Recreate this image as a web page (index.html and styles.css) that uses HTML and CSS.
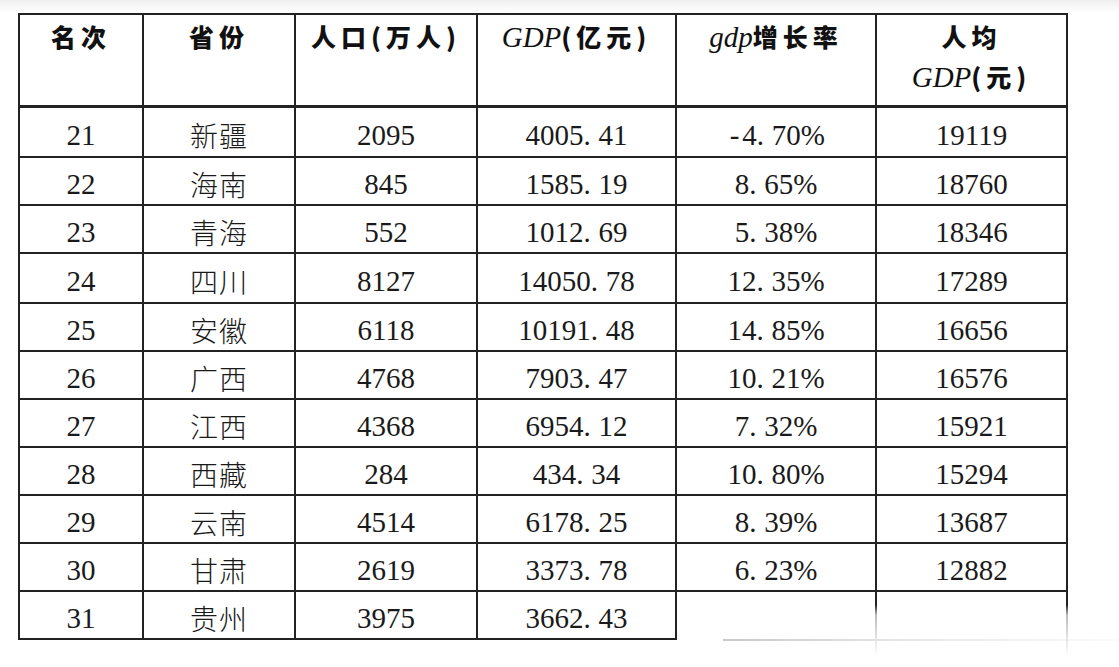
FILE: index.html
```html
<!DOCTYPE html>
<html lang="zh-CN">
<head>
<meta charset="utf-8">
<title>人均GDP排名</title>
<link rel="stylesheet" href="styles.css">
</head>
<body>
<div class="page">
<table class="gdp">
  <colgroup>
    <col class="w1"><col class="w2"><col class="w3"><col class="w4"><col class="w5"><col class="w6">
  </colgroup>
  <thead>
    <tr>
      <th>名次</th>
      <th>省份</th>
      <th>人口(万人)</th>
      <th><span class="lat">GDP</span>(亿元)</th>
      <th><span class="lat">gdp</span>增长率</th>
      <th>人均<br><span class="lat">GDP</span>(元)</th>
    </tr>
  </thead>
  <tbody>
    <tr class="tall"><td>21</td><td class="zh">新疆</td><td>2095</td><td>4005<span class="pt">.</span>41</td><td><span class="minus">-</span>4<span class="pt">.</span>70%</td><td>19119</td></tr>
    <tr><td>22</td><td class="zh">海南</td><td>845</td><td>1585<span class="pt">.</span>19</td><td>8<span class="pt">.</span>65%</td><td>18760</td></tr>
    <tr><td>23</td><td class="zh">青海</td><td>552</td><td>1012<span class="pt">.</span>69</td><td>5<span class="pt">.</span>38%</td><td>18346</td></tr>
    <tr class="tall"><td>24</td><td class="zh">四川</td><td>8127</td><td>14050<span class="pt">.</span>78</td><td>12<span class="pt">.</span>35%</td><td>17289</td></tr>
    <tr><td>25</td><td class="zh">安徽</td><td>6118</td><td>10191<span class="pt">.</span>48</td><td>14<span class="pt">.</span>85%</td><td>16656</td></tr>
    <tr><td>26</td><td class="zh">广西</td><td>4768</td><td>7903<span class="pt">.</span>47</td><td>10<span class="pt">.</span>21%</td><td>16576</td></tr>
    <tr><td>27</td><td class="zh">江西</td><td>4368</td><td>6954<span class="pt">.</span>12</td><td>7<span class="pt">.</span>32%</td><td>15921</td></tr>
    <tr><td>28</td><td class="zh">西藏</td><td>284</td><td>434<span class="pt">.</span>34</td><td>10<span class="pt">.</span>80%</td><td>15294</td></tr>
    <tr><td>29</td><td class="zh">云南</td><td>4514</td><td>6178<span class="pt">.</span>25</td><td>8<span class="pt">.</span>39%</td><td>13687</td></tr>
    <tr><td>30</td><td class="zh">甘肃</td><td>2619</td><td>3373<span class="pt">.</span>78</td><td>6<span class="pt">.</span>23%</td><td>12882</td></tr>
    <tr class="last"><td>31</td><td class="zh">贵州</td><td>3975</td><td>3662<span class="pt">.</span>43</td><td class="c5"></td><td class="c6"></td></tr>
  </tbody>
</table>
</div>
</body>
</html>
```
FILE: styles.css
```css
html, body {
  margin: 0;
  padding: 0;
}
body {
  background: linear-gradient(#efefef 0, #f7f7f7 6px, #ffffff 13px) no-repeat, #ffffff;
  width: 1119px;
  height: 667px;
  overflow: hidden;
  color: #1a1a1a;
  font-family: "Liberation Serif", serif;
}
.page {
  padding: 13px 0 0 18px;
}
.gdp {
  border-collapse: collapse;
  table-layout: fixed;
  width: 1050px;
}
.w1 { width: 124px; }
.w2 { width: 152px; }
.w3 { width: 182px; }
.w4 { width: 199px; }
.w5 { width: 200px; }
.w6 { width: 191px; }

.gdp th,
.gdp td {
  border: 2px solid #222;
  text-align: center;
  padding: 0;
}
.gdp th {
  height: 89px;
  vertical-align: top;
  padding-top: 1px;
  font-family: "Noto Sans CJK SC", sans-serif;
  font-weight: 900;
  font-size: 25px;
  line-height: 40px;
  letter-spacing: 5px;
  color: #111;
  border-bottom-width: 3px;
}
.gdp th .lat {
  font-family: "Liberation Serif", serif;
  font-style: italic;
  font-weight: 400;
  font-size: 29px;
  letter-spacing: 0;
}
.gdp td {
  height: 48px;
  vertical-align: middle;
  padding-top: 7px;
  box-sizing: border-box;
  font-family: "Liberation Serif", serif;
  font-size: 29px;
  line-height: 30px;
  font-weight: 400;
}
.gdp tr.tall td {
  height: 50px;
}
.gdp td.zh {
  font-family: "Noto Sans CJK SC", sans-serif;
  font-weight: 300;
  font-size: 28px;
  letter-spacing: 1px;
}
.pt {
  display: inline-block;
  width: 15px;
  text-align: left;
}
.minus {
  display: inline-block;
  width: 15px;
  text-align: center;
}

.gdp tr.last td.c5 {
  border-bottom-style: hidden;
  border-right-style: hidden;
  position: relative;
}
.gdp tr.last td.c6 {
  border-left-style: hidden;
  border-right-style: hidden;
  border-bottom-style: hidden;
  position: relative;
}
.gdp tr.last td.c5::after {
  content: "";
  position: absolute;
  left: 46px;
  bottom: -2px;
  width: 443px;
  height: 2px;
  background: linear-gradient(to right, #c9c9c9, #e6e6e6 40%, rgba(255,255,255,0));
}
.gdp tr.last td.c6::before,
.gdp tr.last td.c6::after {
  content: "";
  position: absolute;
  top: -1px;
  width: 2px;
  height: 66px;
  background: linear-gradient(#222 0, #222 14px, #bbb 24px, #e8e8e8 50px, rgba(255,255,255,0));
}
.gdp tr.last td.c6::before {
  left: -1px;
}
.gdp tr.last td.c6::after {
  right: -1px;
}
```
